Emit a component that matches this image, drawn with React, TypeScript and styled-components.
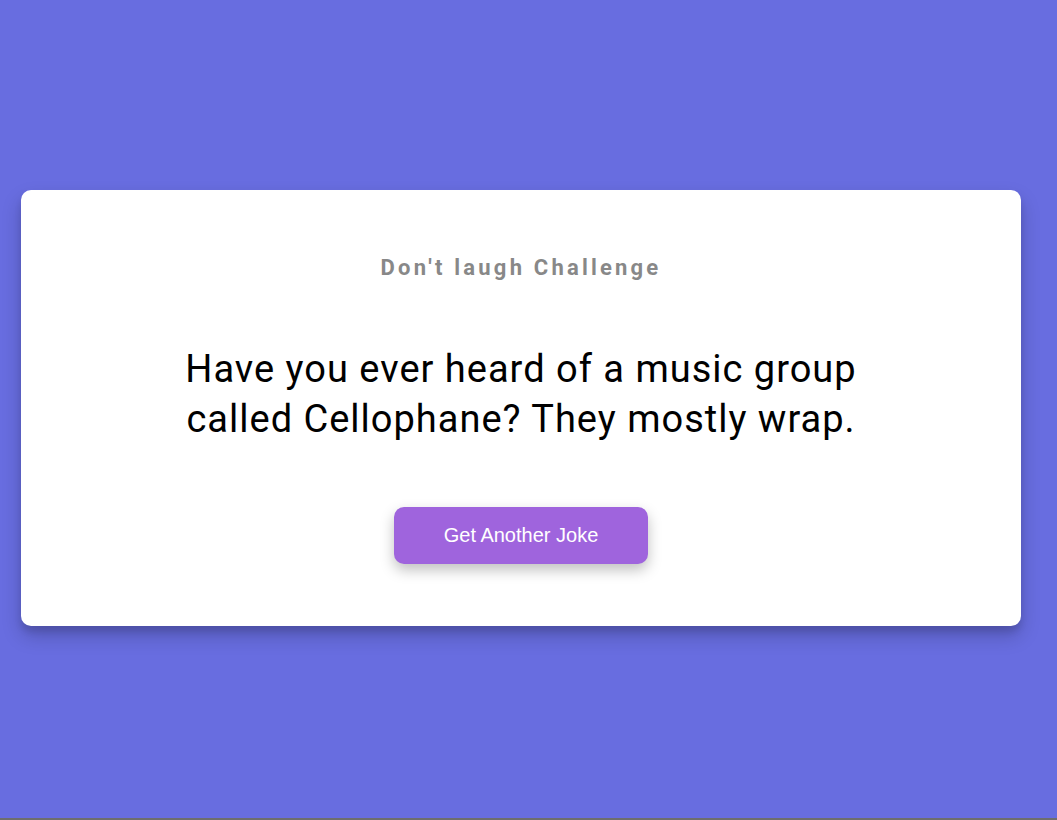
import React from "react";
import styled, { createGlobalStyle } from "styled-components";

const GlobalStyle = createGlobalStyle`
  * { box-sizing: border-box; }
  html, body { margin: 0; padding: 0; }
  body {
    background: #686de0;
    font-family: Roboto, "Liberation Sans", sans-serif;
  }
`;

const Page = styled.main`
  min-height: 820px;
  display: flex;
  align-items: center;
  justify-content: center;
  padding: 0 15px 2px 0;
  border-bottom: 2px solid #6e6e6e;
`;

const Card = styled.section`
  width: 1000px;
  background: #ffffff;
  border-radius: 10px;
  box-shadow: 0 10px 20px rgba(0, 0, 0, 0.2), 0 6px 6px rgba(0, 0, 0, 0.1);
  padding: 63px 20px 62px;
  display: flex;
  flex-direction: column;
  align-items: center;
`;

const Heading = styled.h3`
  margin: 0;
  font-size: 22px;
  font-weight: 700;
  letter-spacing: 3.2px;
  color: #888888;
  line-height: 1.4;
`;

const Joke = styled.p`
  margin: 60px 0 63px;
  max-width: 720px;
  text-align: center;
  font-size: 38px;
  line-height: 50px;
  letter-spacing: 1px;
  color: #000;
`;

const Button = styled.button`
  background: #9f64dd;
  color: #fff;
  border: none;
  border-radius: 10px;
  padding: 17px 50px;
  font-family: "Liberation Sans", Arial, sans-serif;
  font-size: 20px;
  line-height: 23px;
  height: 57px;
  box-shadow: 0 6px 14px rgba(0, 0, 0, 0.25);
  cursor: pointer;
`;

export default function App() {
  return (
    <>
      <GlobalStyle />
      <Page>
        <Card>
          <Heading>Don't laugh Challenge</Heading>
          <Joke>Have you ever heard of a music group called Cellophane? They mostly wrap.</Joke>
          <Button>Get Another Joke</Button>
        </Card>
      </Page>
    </>
  );
}
